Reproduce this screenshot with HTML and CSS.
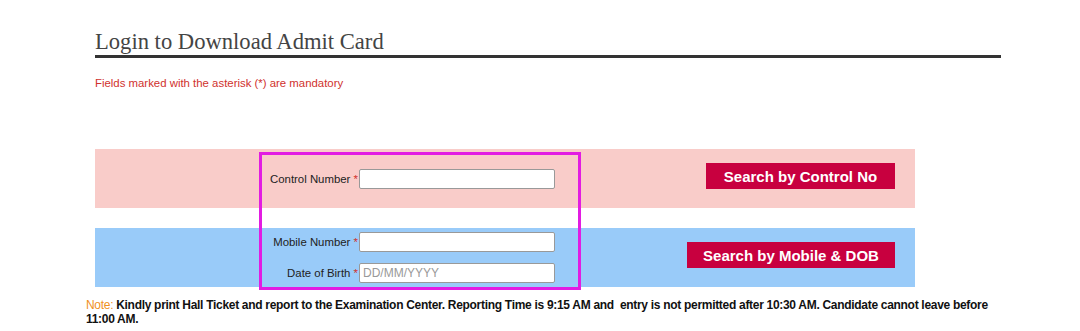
FILE: index.html
```html
<!DOCTYPE html>
<html lang="en">
<head>
  <meta charset="UTF-8" />
  <title>Login to Download Admit Card</title>
  <link rel="stylesheet" href="styles.css">
</head>
<body>
  <div class="page">
    <h1>Login to Download Admit Card</h1>
    <p class="mandatory">Fields marked with the asterisk (*) are mandatory</p>

    <div class="forms">
      <div class="band pink">
        <div class="fields">
          <div class="field">
            <label>Control Number <span class="req">*</span></label>
            <input type="text">
          </div>
        </div>
        <button class="btn btn-control">Search by Control No</button>
      </div>

      <div class="band blue">
        <div class="fields">
          <div class="field">
            <label>Mobile Number <span class="req">*</span></label>
            <input type="text">
          </div>
          <div class="field">
            <label>Date of Birth <span class="req">*</span></label>
            <input type="text" placeholder="DD/MM/YYYY">
          </div>
        </div>
        <button class="btn btn-mobile">Search by Mobile &amp; DOB</button>
      </div>

      <div class="marker"></div>
    </div>

    <p class="note"><span class="note-label">Note:</span> Kindly print Hall Ticket and report to the Examination Center. Reporting Time is 9:15 AM and&nbsp; entry is not permitted after 10:30 AM. Candidate cannot leave before 11:00 AM.</p>
  </div>
</body>
</html>
```

FILE: styles.css
```css
body { margin: 0; background: #fff; font-family: "Liberation Sans", Arial, sans-serif; color: #222; }
.page { padding: 0 79px 0 95px; }

h1 { font-family: "Liberation Serif", "Times New Roman", serif; font-weight: normal; font-size: 22.6px; color: #444; margin: 0; padding: 29px 0 1px; border-bottom: 3px solid #333; line-height: 25px; }

.mandatory { color: #d0312d; font-size: 11.4px; margin: 18px 0 0; line-height: 14px; }

.forms { position: relative; width: 820px; margin-top: 59px; }

.band { display: flex; align-items: center; justify-content: space-between; padding-right: 20px; height: 59px; box-sizing: border-box; }
.band.pink { background: #f9ccc9; }
.band.blue { background: #99cbf9; margin-top: 20px; align-items: flex-start; }

.fields { display: flex; flex-direction: column; gap: 11px; }
.field { display: flex; align-items: center; }
.field label { width: 264px; text-align: right; font-size: 11.4px; color: #222; box-sizing: border-box; padding-right: 1px; }
.req { color: #d0312d; }
.field input { width: 196px; height: 20px; box-sizing: border-box; border: 1px solid #999; border-radius: 2px; padding: 0 3px; font-family: "Liberation Sans", Arial, sans-serif; font-size: 12px; background: #fff; }
.field input::placeholder { color: #999; }

.blue .fields { padding-top: 4px; }
.blue .btn { margin-top: 14px; }
.pink .btn { margin-top: -5px; }

.btn { background: #c8003f; color: #fff; border: none; font-family: "Liberation Sans", Arial, sans-serif; font-weight: bold; font-size: 15px; height: 26px; padding: 0 15px; }
.btn-control { width: 189px; }
.btn-mobile { width: 208px; }

.marker { position: absolute; left: 164px; top: 3px; width: 322px; height: 138px; border: 3px solid #e21ce2; box-sizing: border-box; }

.note { margin: 11px -15px 0 -9px; font-size: 12px; font-weight: bold; line-height: 14px; color: #111; letter-spacing: -0.3px; }
.note-label { color: #f0901e; font-weight: normal; }
```
